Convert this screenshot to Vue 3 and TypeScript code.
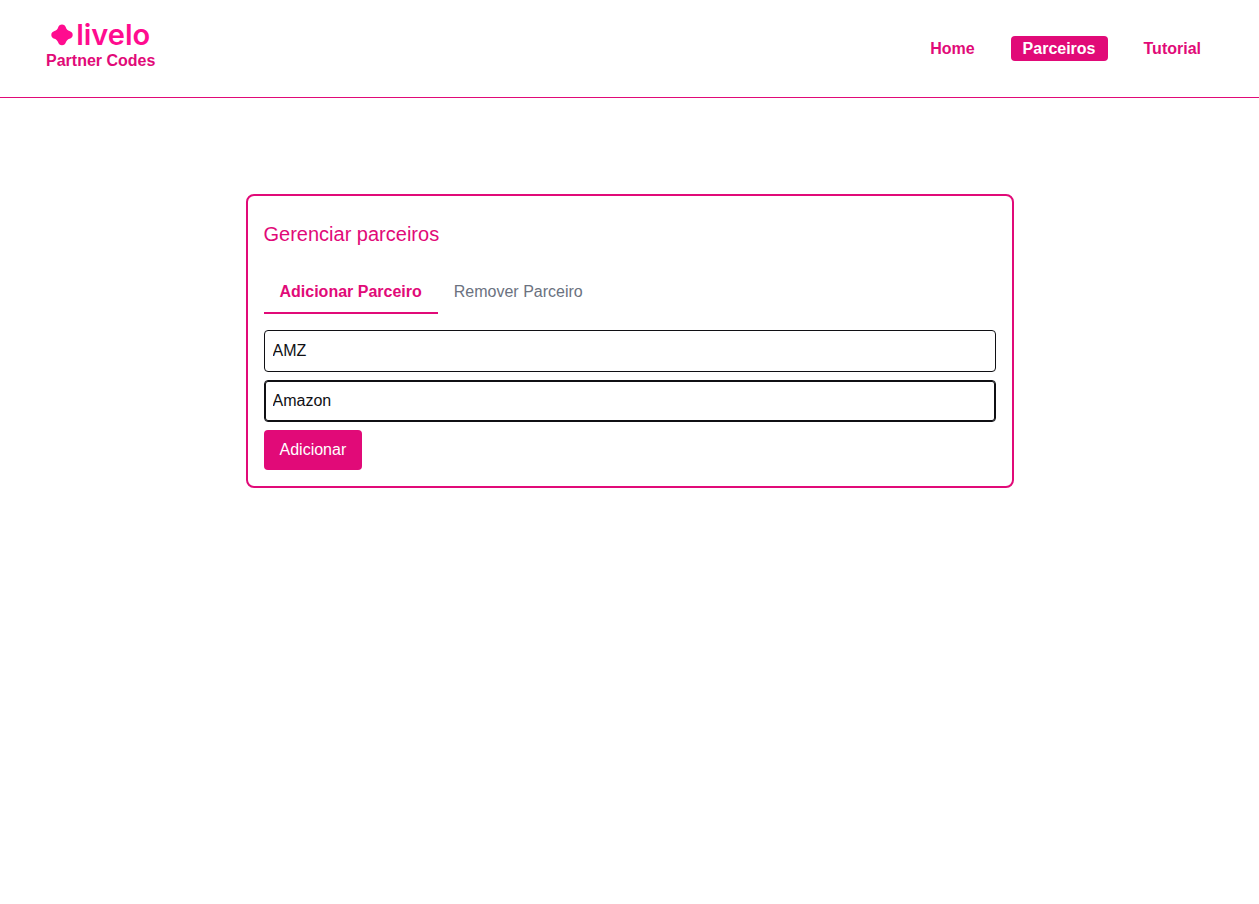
<script setup lang="ts">
import { ref } from 'vue'

interface NavLink {
  label: string
  active: boolean
}

const links: NavLink[] = [
  { label: 'Home', active: false },
  { label: 'Parceiros', active: true },
  { label: 'Tutorial', active: false },
]

const tab = ref<'add' | 'remove'>('add')
const code = ref('AMZ')
const partner = ref('Amazon')
</script>

<template>
  <div class="page">
    <header class="header">
      <a class="brand" href="#">
        <span class="logo">
          <svg class="logo-mark" viewBox="0 0 22 22" aria-hidden="true">
            <path
              d="M11 0.600C13 0.600 14.300 1.700 14.900 3.400C15.400 5 16.700 6.300 18.500 7C20.600 7.700 21.700 9 21.700 10.900C21.700 12.800 20.600 14 18.500 14.700C16.700 15.300 15.400 16.600 14.900 18.300C14.300 20.200 13 21.300 11 21.300C9 21.300 7.700 20.200 7.100 18.300C6.600 16.600 5.300 15.300 3.500 14.700C1.400 14 0.300 12.800 0.300 10.900C0.300 9 1.400 7.700 3.500 7C5.300 6.300 6.600 5 7.100 3.400C7.700 1.700 9 0.600 11 0.600Z"
            />
          </svg>
          <span class="logo-name">livelo</span>
        </span>
        <span class="brand-text">Partner Codes</span>
      </a>
      <nav class="nav">
        <a
          v-for="link in links"
          :key="link.label"
          href="#"
          class="nav-link"
          :class="{ active: link.active }"
          >{{ link.label }}</a
        >
      </nav>
    </header>

    <main class="main">
      <section class="card">
        <h1 class="title">Gerenciar parceiros</h1>
        <div class="tabs" role="tablist">
          <button
            type="button"
            role="tab"
            class="tab"
            :class="{ selected: tab === 'add' }"
            :aria-selected="tab === 'add'"
            @click="tab = 'add'"
          >
            Adicionar Parceiro
          </button>
          <button
            type="button"
            role="tab"
            class="tab"
            :class="{ selected: tab === 'remove' }"
            :aria-selected="tab === 'remove'"
            @click="tab = 'remove'"
          >
            Remover Parceiro
          </button>
        </div>
        <form class="form" @submit.prevent>
          <input v-model="code" class="field" type="text" aria-label="Código do parceiro" />
          <input v-model="partner" class="field current" type="text" aria-label="Nome do parceiro" />
          <button type="submit" class="submit">Adicionar</button>
        </form>
      </section>
    </main>
  </div>
</template>

<style>
body {
  background: #fff;
}
</style>

<style scoped>
.page {
  --pink: #e10a78;
  font-family: 'Liberation Sans', Arial, sans-serif;
  font-size: 16px;
  line-height: 24px;
}
.page *,
.page {
  box-sizing: border-box;
}
.header {
  display: flex;
  align-items: center;
  justify-content: space-between;
  height: 98px;
  padding: 0 46px;
  border-bottom: 1px solid var(--pink);
}
.brand {
  display: flex;
  flex-direction: column;
  align-items: center;
  padding-bottom: 2px;
  color: var(--pink);
  font-weight: 700;
  text-decoration: none;
}
.logo {
  display: flex;
  align-items: center;
  gap: 3px;
  height: 24px;
  margin-bottom: 2px;
  color: #ff0c8f;
}
.logo-mark {
  width: 22px;
  height: 22px;
  fill: currentColor;
}
.logo-name {
  font-family: Inter, sans-serif;
  font-size: 29px;
  font-weight: 600;
  line-height: 24px;
}
.nav {
  display: flex;
  gap: 24px;
}
.nav-link {
  padding: 0 12px;
  border-radius: 4px;
  color: var(--pink);
  font-weight: 700;
  line-height: 25px;
  text-decoration: none;
}
.nav-link.active {
  background: var(--pink);
  color: #fff;
}
.main {
  padding: 96px 16px;
}
.card {
  max-width: 768px;
  margin: 0 auto;
  padding: 24px 16px 16px;
  border: 2px solid var(--pink);
  border-radius: 8px;
}
.title {
  margin: 0 0 24px;
  color: var(--pink);
  font-size: 20px;
  font-weight: 400;
  line-height: 28px;
}
.tabs {
  display: flex;
  margin-bottom: 16px;
}
.tab {
  padding: 8px 16px;
  border: 0;
  border-bottom: 2px solid transparent;
  background: none;
  color: #6b7280;
  font: inherit;
  cursor: pointer;
}
.tab.selected {
  border-color: var(--pink);
  color: var(--pink);
  font-weight: 700;
}
.form {
  display: flex;
  flex-direction: column;
  align-items: flex-start;
  gap: 8px;
}
.field {
  width: 100%;
  height: 42px;
  padding: 0 8px;
  border: 1px solid #101014;
  border-radius: 4px;
  outline: none;
  background: #fff;
  color: #101014;
  font: inherit;
}
.field.current {
  box-shadow: inset 0 0 0 1px #101014;
}
.submit {
  padding: 8px 16px;
  border: 0;
  border-radius: 4px;
  background: var(--pink);
  color: #fff;
  font: inherit;
  cursor: pointer;
}
</style>
